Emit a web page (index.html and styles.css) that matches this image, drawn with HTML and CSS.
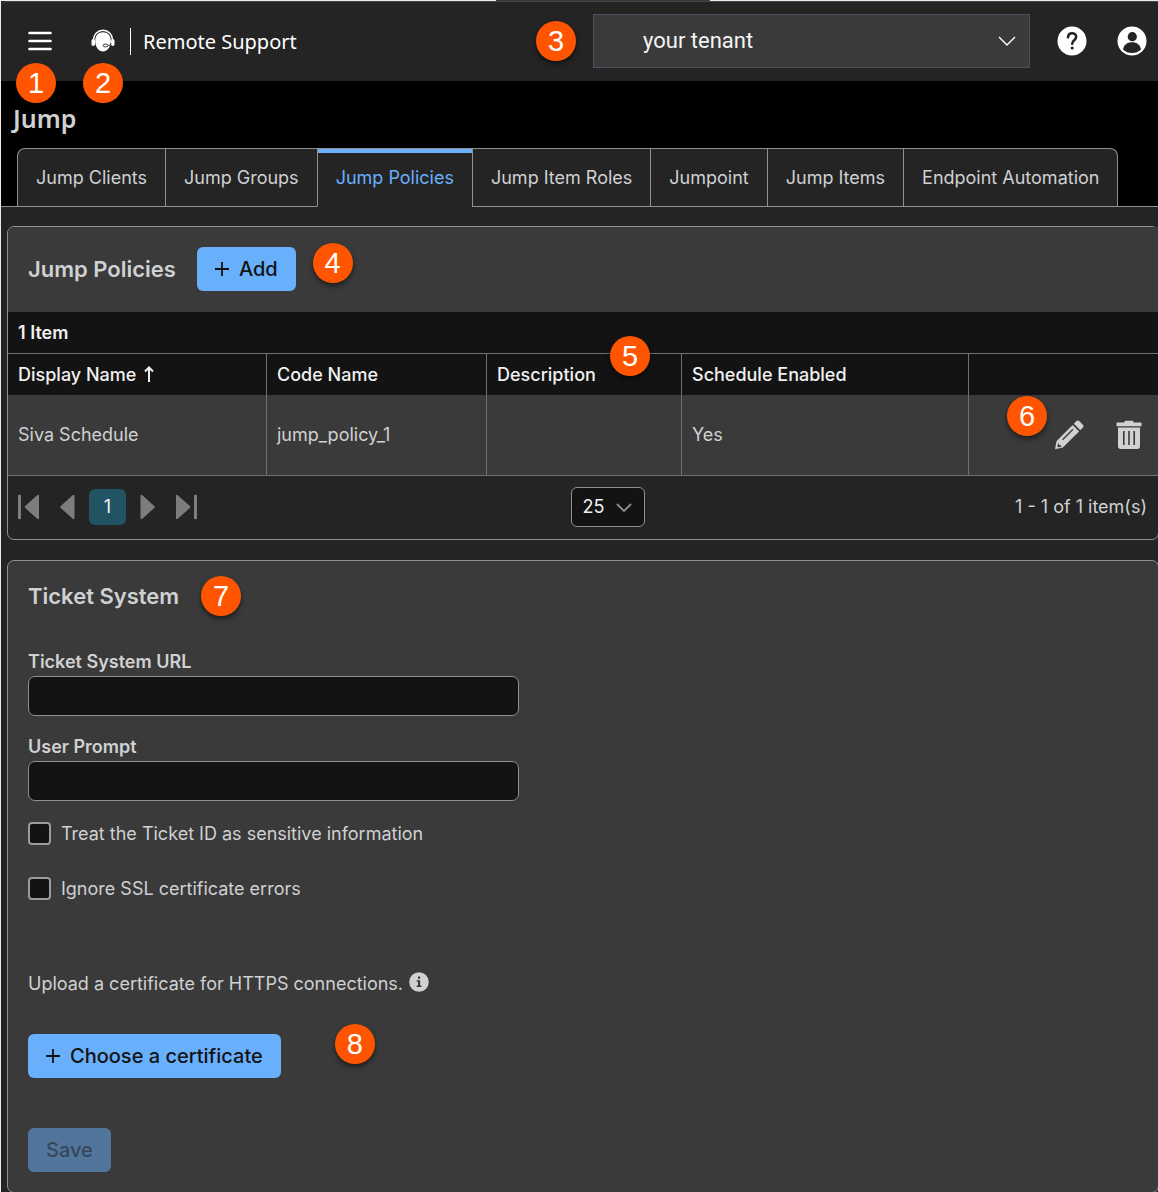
FILE: index.html
```html
<!DOCTYPE html>
<html lang="en">
<head>
<meta charset="utf-8">
<meta name="viewport" content="width=device-width, initial-scale=1">
<title>Jump Policies - Remote Support</title>
<link rel="stylesheet" href="styles.css">
</head>
<body>
<div class="window-edge"><span class="window-tab"></span></div>
<div class="page">
  <header class="topbar">
    <div class="marked">
      <button class="icon-button" type="button" aria-label="Menu">
        <svg width="24" height="24" viewBox="0 0 24 24"><path d="M1.500 4h21M1.500 12h21M1.500 20h21" stroke="#fff" stroke-width="2.600" stroke-linecap="round"/></svg>
      </button>
      <span class="callout callout-menu">1</span>
    </div>
    <div class="marked brand-icon">
      <svg width="24" height="24" viewBox="0 0 24 24">
        <path d="M2.500 11a9.500 9.800 0 0 1 19 0" fill="none" stroke="#fff" stroke-width="1.400"/>
        <rect x="0.500" y="10" width="3.500" height="7" rx="1.700" fill="#fff"/>
        <rect x="20" y="10" width="3.500" height="7" rx="1.700" fill="#fff"/>
        <path d="M12 3.300c-4.700 0-7.800 3.400-7.800 8.700 0 6 3.600 10.500 7.800 10.500s7.800-4.500 7.800-10.500c0-5.300-3.100-8.700-7.800-8.700z" fill="#fff"/>
        <path d="M20.500 14.500c-.8 1.600-2.600 2.200-4.700 2" fill="none" stroke="#242424" stroke-width="1"/>
        <ellipse cx="14.500" cy="16.500" rx="2.600" ry="1.400" fill="#fff" stroke="#242424" stroke-width=".9"/>
      </svg>
      <span class="callout callout-brand">2</span>
    </div>
    <span class="brand-name">Remote Support</span>
    <span class="callout callout-tenant">3</span>
    <div class="tenant">
      <select aria-label="Tenant"><option>your tenant</option></select>
      <svg width="18" height="10" viewBox="0 0 18 10"><path d="M1 1l8 8 8-8" fill="none" stroke="#fff" stroke-width="1.400"/></svg>
    </div>
    <button class="icon-button help" type="button" aria-label="Help">
      <svg width="30" height="30" viewBox="0 0 30 30"><circle cx="15" cy="15" r="14.500" fill="#fff"/><path d="M11 11.300c.2-2.600 1.800-4 4.100-4s4 1.500 4 3.700c0 3.200-3.900 3.200-3.900 6.700" fill="none" stroke="#242424" stroke-width="2.600" stroke-linecap="round"/><circle cx="15.200" cy="22" r="1.600" fill="#242424"/></svg>
    </button>
    <button class="icon-button account" type="button" aria-label="Account">
      <svg width="30" height="30" viewBox="0 0 30 30"><circle cx="15" cy="15" r="14.500" fill="#fff"/><circle cx="15.300" cy="10.700" r="4.600" fill="#242424"/><path d="M6 23.500c.7-4.700 4-7.300 9-7.300s8.300 2.600 9 7.300a13.200 13.200 0 0 1-18 0z" fill="#242424"/></svg>
    </button>
  </header>

  <div class="hero">
    <h1>Jump</h1>
    <nav class="tabs">
      <a href="#clients">Jump Clients</a>
      <a href="#groups">Jump Groups</a>
      <a href="#policies" class="active" aria-current="page">Jump Policies</a>
      <a href="#roles">Jump Item Roles</a>
      <a href="#jumpoint">Jumpoint</a>
      <a href="#items">Jump Items</a>
      <a href="#automation">Endpoint Automation</a>
    </nav>
  </div>

  <main class="content">
    <section class="card">
      <div class="card-head">
        <h2>Jump Policies</h2>
        <button class="primary" type="button">
          <svg width="14" height="14" viewBox="0 0 14 14"><path d="M7 0v14M0 7h14" stroke="#131313" stroke-width="1.800"/></svg>Add
        </button>
        <span class="callout callout-add">4</span>
      </div>
      <div class="count">1 Item</div>
      <div class="table-wrap">
        <table>
          <colgroup><col class="col-name"><col class="col-code"><col class="col-desc"><col class="col-schedule"><col></colgroup>
          <thead>
            <tr>
              <th>Display Name<svg class="sort" width="10" height="16" viewBox="0 0 10 16"><path d="M5 16V2M1 5.500L5 1.500l4 4" fill="none" stroke="#f0f0f0" stroke-width="2"/></svg></th>
              <th>Code Name</th>
              <th>Description</th>
              <th>Schedule Enabled</th>
              <th></th>
            </tr>
          </thead>
          <tbody>
            <tr>
              <td>Siva Schedule</td>
              <td>jump_policy_1</td>
              <td></td>
              <td>Yes</td>
              <td>
                <div class="row-actions">
                  <button class="icon-button" type="button" aria-label="Edit">
                    <svg width="30" height="30" viewBox="0 0 30 30"><g fill="#cfd1d2"><path d="M19.800 3.700l2.600-2.600c.8-.8 2-.8 2.800 0l3.700 3.700c.8.800.8 2 0 2.800l-2.600 2.600z"/><path d="M18.600 4.900l6.500 6.500L8.800 27.500 1 29.300l1.600-8.200z"/></g><path d="M8.500 19.800L19 9.300" stroke="#3a3a3a" stroke-width="1.300"/><path d="M4.300 22.700l.7 2.400 2.800.6-1.300 1.200-2.700.4-.3-1.200z" fill="#3a3a3a"/></svg>
                  </button>
                  <button class="icon-button" type="button" aria-label="Delete">
                    <svg width="26" height="30" viewBox="0 0 26 30"><g fill="#cfd1d2"><path d="M1.500 2.500H8L9.300.8h7.400L18 2.500h6.500c.6 0 1 .4 1 1v2.700h-25V3.500c0-.6.400-1 1-1z"/><path fill-rule="evenodd" d="M2 7.500h22v19c0 1.500-1 2.500-2.500 2.500h-17C3 29 2 28 2 26.500zM7 11v14h1.600V11zM12.200 11v14h1.600V11zM17.400 11v14H19V11z"/></g></svg>
                  </button>
                </div>
              </td>
            </tr>
          </tbody>
        </table>
        <span class="callout callout-columns">5</span>
        <span class="callout callout-actions">6</span>
      </div>
      <div class="pager">
        <div class="pager-nav">
          <button class="icon-button" type="button" aria-label="First page"><svg width="22" height="26" viewBox="0 0 22 26"><path d="M0 1.500C0 .5 3 .5 3 1.500v23c0 1-3 1-3 0zM21 1.500v23c0 1-1 1-1.800.3L7.500 14.200a1.500 1.500 0 0 1 0-2.400L19.200 1.200C20 .5 21 .5 21 1.500z"/></svg></button>
          <button class="icon-button" type="button" aria-label="Previous page"><svg width="15" height="26" viewBox="0 0 15 26"><path d="M14.500 1.500v23c0 1-1 1-1.800.3L1 14.200a1.500 1.500 0 0 1 0-2.400L12.700 1.200c.8-.7 1.800-.7 1.800.3z"/></svg></button>
          <button class="page-number" type="button" aria-current="page">1</button>
          <button class="icon-button" type="button" aria-label="Next page"><svg width="15" height="26" viewBox="0 0 15 26"><path d="M.5 1.500v23c0 1 1 1 1.800.3L14 14.200a1.500 1.500 0 0 0 0-2.400L2.300 1.200C1.500.5.5.5.5 1.500z"/></svg></button>
          <button class="icon-button" type="button" aria-label="Last page"><svg width="22" height="26" viewBox="0 0 22 26"><path d="M22 1.500c0-1-3-1-3 0v23c0 1 3 1 3 0zM1 1.500v23c0 1 1 1 1.800.3l11.700-10.600a1.500 1.500 0 0 0 0-2.400L2.800 1.200C2 .5 1 .5 1 1.500z"/></svg></button>
        </div>
        <div class="page-size">
          <select aria-label="Items per page"><option>25</option></select>
          <svg width="16" height="9" viewBox="0 0 16 9"><path d="M1 1l7 7 7-7" fill="none" stroke="#8b9297" stroke-width="1.800"/></svg>
        </div>
        <span class="range">1 - 1 of 1 item(s)</span>
      </div>
    </section>

    <form class="card ticket">
      <div class="ticket-head">
        <h2>Ticket System</h2>
        <span class="callout">7</span>
      </div>
      <div class="field">
        <label for="ticket-url">Ticket System URL</label>
        <input type="text" id="ticket-url">
      </div>
      <div class="field">
        <label for="user-prompt">User Prompt</label>
        <input type="text" id="user-prompt">
      </div>
      <div class="checks">
        <label><input type="checkbox">Treat the Ticket ID as sensitive information</label>
        <label><input type="checkbox">Ignore SSL certificate errors</label>
      </div>
      <p class="upload">Upload a certificate for HTTPS connections.
        <svg width="20" height="20" viewBox="0 0 20 20"><circle cx="10" cy="10" r="9.800" fill="#cfd1d2"/><path d="M7.700 8.200h3.400v5.300h1.400V15H7.600v-1.500H9V9.700H7.700zM9 4.500h2.100v2.200H9z" fill="#3a3a3a"/></svg>
      </p>
      <div class="choose">
        <button class="primary" type="button">
          <svg width="14" height="14" viewBox="0 0 14 14"><path d="M7 0v14M0 7h14" stroke="#131313" stroke-width="1.800"/></svg>Choose a certificate
        </button>
        <span class="callout callout-certificate">8</span>
      </div>
      <button class="primary" type="submit" disabled>Save</button>
    </form>
  </main>
</div>
</body>
</html>
```
FILE: styles.css
```css
* { box-sizing: border-box; }

body {
  margin: 0;
  background: #242424;
  color: #cfd1d2;
  font: 18px/24px Inter, "Liberation Sans", sans-serif;
}

h1, h2, p { margin: 0; }
svg { display: block; flex: none; }
button, select, input { font: inherit; color: inherit; margin: 0; }

.window-edge {
  display: flex;
  justify-content: center;
  height: 1px;
  background: #e8eceb;
}
.window-tab { width: 214px; margin-left: 48px; background: #3a3a3a; }

.page {
  min-height: calc(100vh - 1px);
  border-left: 1px solid #e8eceb;
  overflow: hidden;
}

.icon-button {
  display: flex;
  padding: 0;
  border: 0;
  background: none;
}

/* Numbered callouts */
.callout {
  display: block;
  flex: none;
  width: 40px;
  height: 40px;
  border-radius: 50%;
  background: #ff5500;
  box-shadow: 0 3px 5px rgba(0, 0, 0, .5);
  color: #fff;
  font: 29px/41px "Liberation Sans", Arial, sans-serif;
  text-align: center;
}
.marked { position: relative; }
.callout-menu, .callout-brand {
  position: absolute;
  z-index: 1;
  top: 34px;
  left: -12px;
  box-shadow: none;
}
.callout-brand { left: -8px; }

/* Top bar */
.topbar {
  display: flex;
  align-items: center;
  height: 80px;
  padding: 0 11px 1px 27px;
  border-top: 1px solid #444747;
  border-top-left-radius: 6px;
}
.brand-icon { margin-left: 39px; }
.brand-name {
  margin-left: 15px;
  padding: 0 12px;
  border-left: 1px solid #fff;
  color: #fff;
  font: 20px/27px "Noto Sans", "Open Sans", sans-serif;
}
.callout-tenant { margin-left: auto; }
.tenant {
  display: flex;
  align-items: center;
  width: 437px;
  margin-left: 17px;
}
.tenant select {
  flex: 1;
  height: 54px;
  margin-right: -32px;
  padding: 0 49px;
  border: 1px solid #46535f;
  border-radius: 0;
  background: #3a3a3a;
  appearance: none;
  color: #f5f5f5;
  font: 22px/28px Roboto, sans-serif;
}
.tenant svg { margin-right: 14px; pointer-events: none; }
.help { margin-left: 27px; }
.account { margin-left: 30px; }

/* Title and tabs */
.hero {
  padding: 21px 0 0 12px;
  border-bottom: 1px solid #8f9090;
  background: #000;
}
h1 {
  font: 600 25px/32px "Noto Sans", "Open Sans", sans-serif;
}
.tabs {
  display: flex;
  width: max-content;
  margin: 14px 0 -1px 4px;
  border: 1px solid #8f9090;
  border-bottom: 0;
  border-radius: 8px 8px 0 0;
  background: #242424;
}
.tabs a {
  padding: 17px 18px 16px;
  border-bottom: 1px solid #8f9090;
  border-left: 1px solid #8f9090;
  color: inherit;
  text-decoration: none;
}
.tabs a:first-child { border-left: 0; }
.tabs .active {
  border-bottom-color: #242424;
  box-shadow: inset 0 4px #68affc;
  color: #68affc;
}

/* Cards */
.content {
  display: flex;
  flex-direction: column;
  gap: 20px;
  margin: 19px -1px -2px 6px;
}
.card {
  border: 1px solid #8f9090;
  border-radius: 7px;
}
h2 { font-size: 22px; line-height: 28px; font-weight: 600; }

.primary {
  display: flex;
  align-items: center;
  gap: 10px;
  height: 44px;
  padding: 0 18px;
  border: 0;
  border-radius: 6px;
  background: #68affc;
  color: #131313;
  font-size: 20px;
  font-weight: 500;
}
.primary:disabled { background: #52759b; color: #34475b; }

.card-head {
  display: flex;
  align-items: center;
  height: 85px;
  padding: 0 20px 1px;
  border-radius: 6px 0 0 0;
  background: #3a3a3a;
}
.card-head .primary { margin-left: 21px; }
.callout-add { margin: 0 0 12px 17px; }

.count {
  padding: 9px 10px 8px;
  background: #131313;
  color: #f0f0f0;
  font-weight: 600;
}

/* Policies table */
.table-wrap { position: relative; }
table {
  width: 100%;
  table-layout: fixed;
  border-collapse: separate;
  border-spacing: 0;
}
.col-name { width: 259px; }
.col-code { width: 220px; }
.col-desc { width: 195px; }
.col-schedule { width: 287px; }
th, td {
  padding: 0 10px;
  border-right: 1px solid #6f7071;
  text-align: left;
}
th:last-child, td:last-child { border-right: 0; }
th {
  height: 42px;
  border-top: 1px solid #6f7071;
  background: #131313;
  color: #f0f0f0;
  font-weight: 500;
}
td {
  height: 81px;
  border-bottom: 1px solid #6f7071;
  background: #3a3a3a;
}
.sort { display: inline-block; margin-left: 8px; vertical-align: -1px; }
.row-actions { display: flex; justify-content: flex-end; gap: 32px; padding-right: 6px; }
.callout-columns { position: absolute; top: -17px; left: 602px; }
.callout-actions { position: absolute; top: 43px; right: 111px; }

/* Pager */
.pager {
  display: grid;
  grid-template-columns: 1fr auto 1fr;
  align-items: center;
  height: 63px;
  padding: 0 11px 1px 10px;
}
.pager-nav { display: flex; align-items: center; gap: 20px; }
.pager-nav svg { fill: #7c7e7e; }
.page-number {
  width: 37px;
  height: 36px;
  margin: 0 -6px;
  padding: 0;
  border: 0;
  border-radius: 6px;
  background: #225362;
  color: #f0f0f0;
}
.page-size { display: flex; align-items: center; margin-right: -50px; }
.page-size select {
  width: 74px;
  height: 40px;
  margin-right: -29px;
  padding: 0 11px;
  border: 1px solid #8f9090;
  border-radius: 6px;
  background: #131313;
  appearance: none;
  color: #f0f0f0;
}
.page-size svg { margin-right: 13px; pointer-events: none; }
.range { text-align: right; }

/* Ticket system form */
.ticket {
  display: flex;
  flex-direction: column;
  align-items: flex-start;
  padding: 15px 20px 20px;
  background: #3a3a3a;
}
.ticket-head { display: flex; align-items: center; gap: 22px; margin-bottom: 34px; }
.field { display: flex; flex-direction: column; gap: 2px; width: 100%; max-width: 491px; margin-bottom: 19px; }
.field label { font-weight: 600; }
.field input {
  width: 100%;
  height: 40px;
  padding: 0 10px;
  border: 1px solid #8f9090;
  border-radius: 7px;
  background: #131313;
}
.checks { display: flex; flex-direction: column; gap: 31px; margin-top: 2px; }
.checks label { display: flex; align-items: flex-start; gap: 10px; }
.checks input {
  width: 23px;
  height: 23px;
  border: 2px solid #9a9b9b;
  border-radius: 4px;
  background: #131313;
  appearance: none;
}
.upload { display: flex; gap: 6px; margin: 71px 0 38px; }
.choose { display: flex; margin-bottom: 50px; }
.callout-certificate { margin: -10px 0 0 54px; }
```
